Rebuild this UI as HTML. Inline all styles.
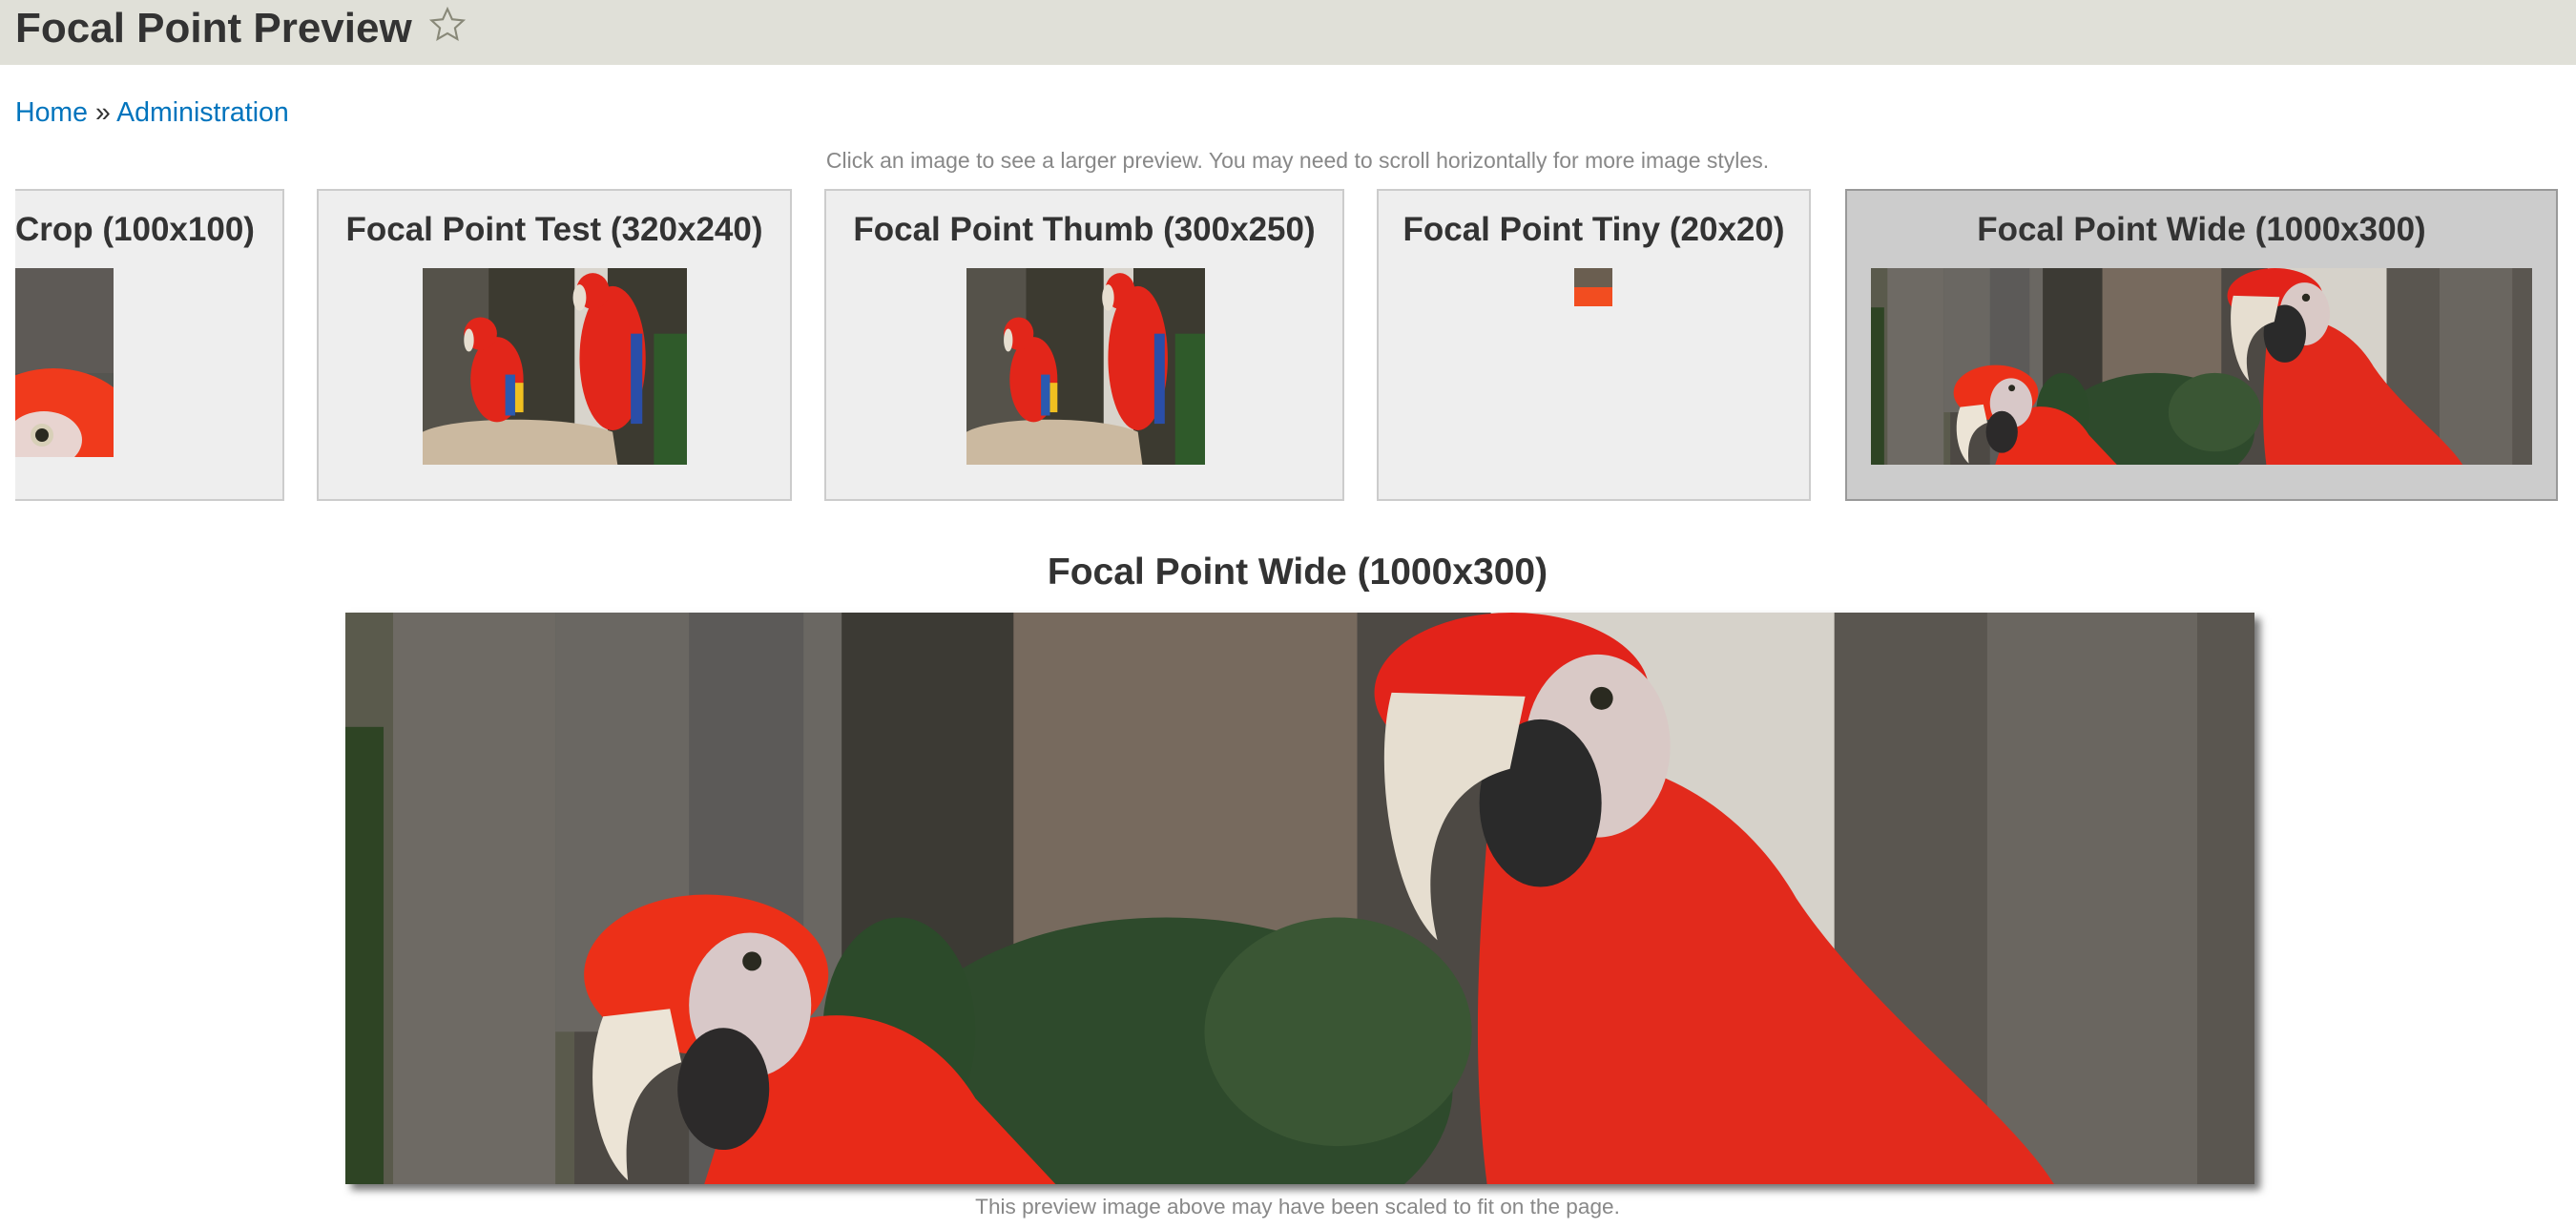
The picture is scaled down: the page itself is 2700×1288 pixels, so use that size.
<!DOCTYPE html>
<html><head><meta charset="utf-8"><style>
*{margin:0;padding:0;box-sizing:border-box}
body{width:2700px;height:1288px;background:#fff;font-family:"Liberation Sans",sans-serif;position:relative;overflow:hidden;color:#333}
.hdr{position:absolute;left:0;top:0;width:2700px;height:68px;background:#e0e0d8}
.hdr h1{position:absolute;left:16px;top:5px;font-size:44px;font-weight:bold;color:#333;white-space:nowrap}
.star{display:inline-block;vertical-align:-3px;margin-left:16px}
.bc{position:absolute;left:16px;top:102px;font-size:28.5px;color:#333}
.bc a{color:#0074bd;text-decoration:none}
.help{position:absolute;left:0;width:2720px;text-align:center;top:155px;font-size:23px;color:#888}
.card{position:absolute;top:198px;height:327px;background:#eee;border:2px solid #ccc;overflow:hidden}
.card.act{background:#ccc;border-color:#999}
.card h3{position:absolute;top:21px;left:0;right:0;text-align:center;font-size:35px;font-weight:bold;color:#333;white-space:nowrap}
.card svg{position:absolute}
.big{position:absolute;left:362px;top:642px;width:2001px;height:599px;box-shadow:6px 6px 8px rgba(0,0,0,0.55)}
.bt{position:absolute;left:0;width:2720px;text-align:center;top:578px;font-size:39px;font-weight:bold;color:#333}
.cap{position:absolute;left:0;width:2720px;text-align:center;top:1252px;font-size:22.6px;color:#888}
</style></head><body>
<svg width="0" height="0" style="position:absolute">
<defs>
<symbol id="wide" viewBox="0 0 1000 300" preserveAspectRatio="none">
<rect width="1000" height="300" fill="#4d4944"/>
<rect x="0" y="0" width="120" height="300" fill="#5a5a4c"/>
<rect x="0" y="60" width="20" height="240" fill="#2e4424"/>
<rect x="25" y="0" width="85" height="300" fill="#6e6a64"/>
<rect x="110" y="0" width="150" height="220" fill="#6a6762"/>
<rect x="180" y="0" width="60" height="300" fill="#5c5a58"/>
<rect x="260" y="0" width="90" height="300" fill="#3c3a34"/>
<rect x="350" y="0" width="180" height="190" fill="#776a5e"/>
<rect x="600" y="0" width="180" height="260" fill="#d6d2ca"/>
<rect x="780" y="0" width="220" height="300" fill="#5a5650"/>
<rect x="860" y="0" width="110" height="300" fill="#6a6660"/>
<ellipse cx="430" cy="250" rx="150" ry="90" fill="#2e4a2c"/>
<ellipse cx="520" cy="220" rx="70" ry="60" fill="#3a5634"/>
<ellipse cx="290" cy="220" rx="40" ry="60" fill="#2c4a2a"/>
<path d="M600 90C640 60 720 80 760 150C800 210 870 260 895 300L598 300C588 220 596 150 600 90Z" fill="#e22a1c"/>
<ellipse cx="611" cy="42" rx="72" ry="42" fill="#e2231a"/>
<ellipse cx="656" cy="70" rx="38" ry="48" fill="#d9c9c6"/>
<circle cx="658" cy="45" r="6" fill="#2a2a20"/>
<ellipse cx="626" cy="100" rx="32" ry="44" fill="#2a2a2a"/>
<path d="M548 42C538 80 548 150 572 172C562 130 572 92 610 82L618 44Z" fill="#e6ded0"/>
<path d="M210 230C240 200 300 205 330 255L372 300L188 300Z" fill="#e82a18"/>
<ellipse cx="189" cy="190" rx="64" ry="42" fill="#ec3018"/>
<ellipse cx="212" cy="206" rx="32" ry="38" fill="#d8c8c8"/>
<circle cx="213" cy="183" r="5" fill="#2a2a20"/>
<ellipse cx="198" cy="250" rx="24" ry="32" fill="#2c2a2a"/>
<path d="M135 212C124 240 130 282 148 298C145 270 150 245 176 236L170 208Z" fill="#ece4d6"/>
</symbol>
<symbol id="pair" viewBox="0 0 160 120" preserveAspectRatio="none">
<rect width="160" height="120" fill="#3c3a30"/>
<rect x="0" y="0" width="40" height="120" fill="#55524a"/>
<rect x="92" y="0" width="20" height="110" fill="#d8d4cc"/>
<rect x="140" y="40" width="20" height="80" fill="#2f5a2a"/>
<path d="M0 100C20 90 90 90 115 100L118 120L0 120Z" fill="#cbb9a0"/>
<ellipse cx="45" cy="68" rx="16" ry="26" fill="#e2261a"/>
<ellipse cx="35" cy="40" rx="10" ry="10" fill="#e2261a"/>
<rect x="50" y="65" width="6" height="25" fill="#2a5ab0"/>
<rect x="56" y="70" width="5" height="18" fill="#f0c020"/>
<ellipse cx="115" cy="55" rx="20" ry="44" fill="#e2261a"/>
<ellipse cx="103" cy="14" rx="10" ry="11" fill="#e2261a"/>
<rect x="126" y="40" width="7" height="55" fill="#2a4ea8"/>
<ellipse cx="95" cy="18" rx="4" ry="8" fill="#e6ded0"/>
<ellipse cx="28" cy="44" rx="3" ry="7" fill="#e6ded0"/>
</symbol>
</defs>
</svg>
<div class="hdr"><h1>Focal Point Preview<svg class="star" width="42" height="42" viewBox="0 0 24 24"><path d="M12 2.5l2.8 6.2 6.7.7-5 4.5 1.4 6.6L12 17.1l-5.9 3.4 1.4-6.6-5-4.5 6.7-.7z" fill="none" stroke="#888878" stroke-width="1.2"/></svg></h1>
</div>
<div class="bc"><a>Home</a> » <a>Administration</a></div>
<div class="help">Click an image to see a larger preview. You may need to scroll horizontally for more image styles.</div>

<div class="card" style="left:16px;width:282px;border-left:none">
<h3 style="text-align:left;left:0">Crop (100x100)</h3>
<svg style="left:0;top:81px" width="103" height="198" viewBox="0 0 103 198" preserveAspectRatio="none">
<rect width="103" height="198" fill="#555550"/><rect y="0" width="103" height="110" fill="#5e5a56"/>
<ellipse cx="40" cy="175" rx="90" ry="70" fill="#f03a1c"/>
<ellipse cx="30" cy="180" rx="40" ry="30" fill="#e8d4d0"/>
<circle cx="28" cy="175" r="12" fill="#d8d0b8"/><circle cx="28" cy="175" r="7" fill="#2a2a20"/>
</svg></div>

<div class="card" style="left:332px;width:498px"><h3>Focal Point Test (320x240)</h3>
<svg style="left:109px;top:81px" width="277" height="206"><use href="#pair" width="277" height="206"/></svg></div>

<div class="card" style="left:864px;width:545px"><h3>Focal Point Thumb (300x250)</h3>
<svg style="left:147px;top:81px" width="250" height="206"><use href="#pair" width="250" height="206"/></svg></div>

<div class="card" style="left:1443px;width:455px"><h3>Focal Point Tiny (20x20)</h3>
<svg style="left:205px;top:81px" width="40" height="40"><rect width="40" height="20" fill="#6a5e50"/><rect y="20" width="40" height="20" fill="#f24d20"/></svg></div>

<div class="card act" style="left:1934px;width:747px"><h3>Focal Point Wide (1000x300)</h3>
<svg style="left:25px;top:81px" width="693" height="206"><use href="#wide" width="693" height="206"/></svg></div>

<div class="bt">Focal Point Wide (1000x300)</div>
<svg class="big" width="2001" height="599"><use href="#wide" width="2001" height="599"/></svg>
<div class="cap">This preview image above may have been scaled to fit on the page.</div>
</body></html>
